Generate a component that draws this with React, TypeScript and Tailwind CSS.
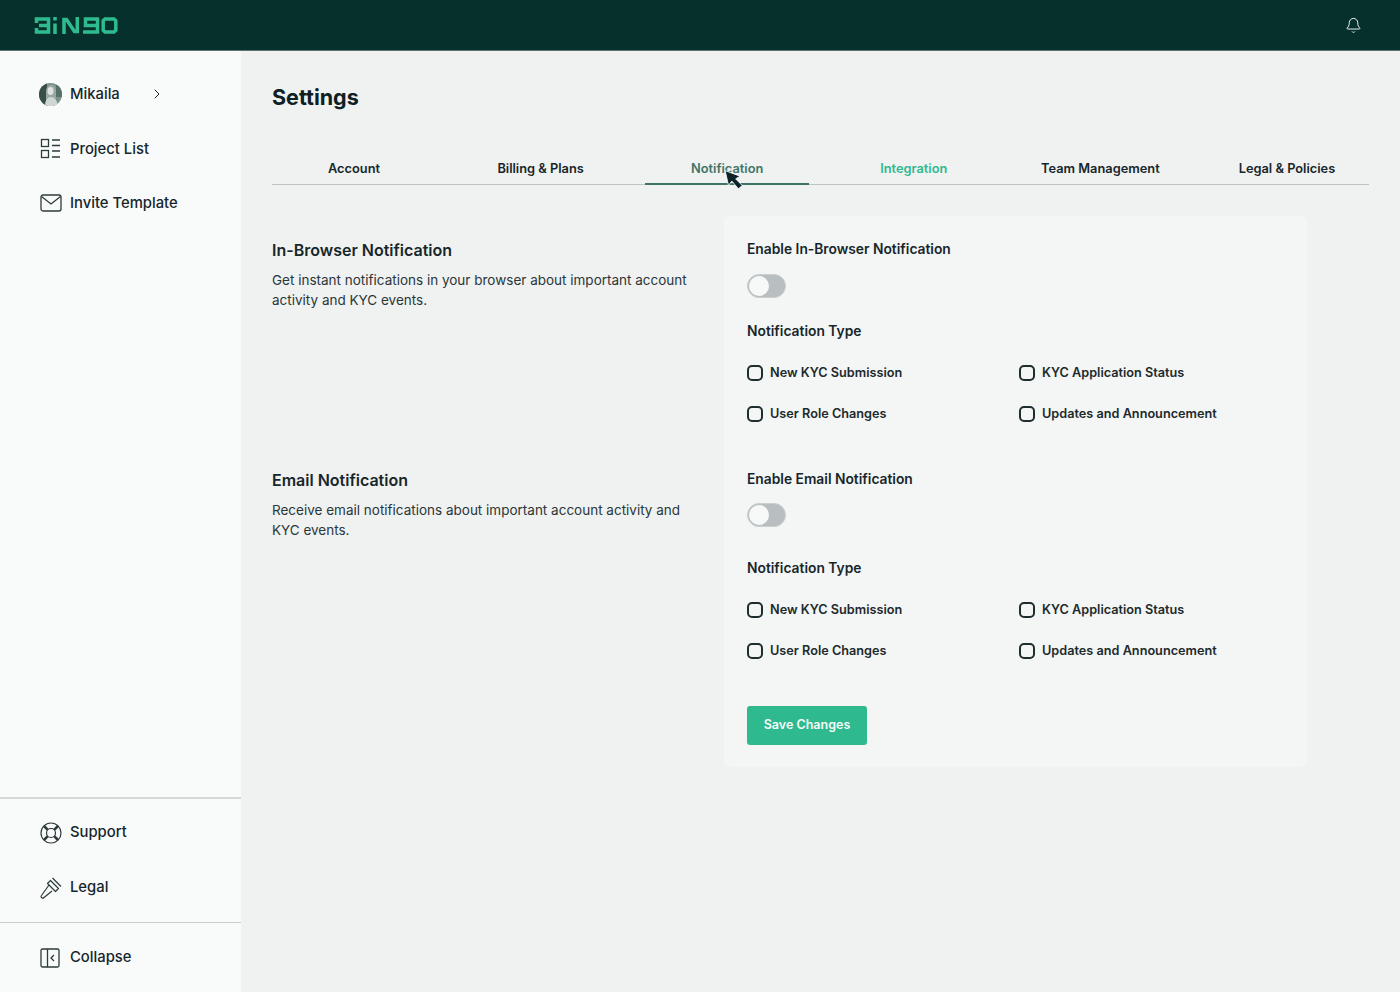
import { Bell, ChevronRight } from "lucide-react";

const tabs = ["Account", "Billing & Plans", "Notification", "Integration", "Team Management", "Legal & Policies"];

function Logo() {
  return (
    <svg width="84" height="17" viewBox="0 0 84 17" fill="none" stroke="#2fbb90" strokeWidth="3.500">
      <path d="M2.500 6V2h12v13h-12v-4M5 8.500h9.500" />
      <path d="M21 0v3.500M21 6.500V17" />
      <path d="M30 17V2.500h2.500l8 12h2.800V0" />
      <path d="M65 2H51.500v6.500H64M63.500 2v13H49" />
      <path d="M71 2h9l1.800 1.800v9.400L80 15h-9l-1.800-1.800V3.800z" />
    </svg>
  );
}

function Avatar() {
  return (
    <svg width="23" height="23" viewBox="0 0 23 23" className="shrink-0">
      <defs>
        <clipPath id="avatar-clip">
          <circle cx="11.500" cy="11.500" r="11.500" />
        </clipPath>
      </defs>
      <g clipPath="url(#avatar-clip)">
        <rect width="23" height="23" fill="#7d908b" />
        <rect width="8" height="23" fill="#3a4e49" />
        <rect x="17" width="6" height="14" fill="#56706a" />
        <path d="M7 23V9c0-5 2-7 5-7s5 2 5 7v14z" fill="#9aa8a4" />
        <ellipse cx="11.500" cy="8" rx="3" ry="4" fill="#dfe4e2" />
        <path d="M6 23c0-6 3-9 6-9s6 3 7 9z" fill="#cfd7d4" />
      </g>
    </svg>
  );
}

function ListIcon() {
  return (
    <svg width="22" height="22" viewBox="0 0 22 22" fill="none" stroke="#2d3b3a" strokeWidth="1.300">
      <rect x="1.500" y="1.500" width="7" height="7" />
      <rect x="1.500" y="12.500" width="7" height="7" />
      <path d="M12 2h8M12 7.500h8M12 13h8M12 19h8" />
    </svg>
  );
}

function MailIcon() {
  return (
    <svg width="22" height="18" viewBox="0 0 22 18" fill="none" stroke="#2d3b3a" strokeWidth="1.300">
      <rect x="1" y="1" width="20" height="16" rx="2" />
      <path d="M1.500 2.500 11 10l9.500-7.500" />
    </svg>
  );
}

function SupportIcon() {
  return (
    <svg width="22" height="22" viewBox="0 0 22 22" fill="none" stroke="#2d3b3a" strokeWidth="1.200">
      <circle cx="11" cy="11" r="10" />
      <circle cx="11" cy="11" r="4.500" />
      <path d="m4 4 3.800 3.800M18 4l-3.800 3.800M4 18l3.800-3.800M18 18l-3.800-3.800" strokeWidth="2.600" />
    </svg>
  );
}

function GavelIcon() {
  return (
    <svg width="22" height="22" viewBox="0 0 22 22" fill="none" stroke="#2d3b3a" strokeWidth="1.200" strokeLinejoin="round">
      <path d="m10.500 3.500 8 8-3 3-8-8z" />
      <path d="m12.500 1 8.500 8.500" />
      <path d="m9 8-7.500 10.500a1.500 1.500 0 0 0 2.500 2L12 14" />
    </svg>
  );
}

function CollapseIcon() {
  return (
    <svg width="20" height="20" viewBox="0 0 20 20" fill="none" stroke="#2d3b3a" strokeWidth="1.300">
      <rect x="1" y="1" width="18" height="18" rx="1.500" />
      <path d="M7.500 1v18" />
      <path d="m14 7-3 3 3 3" />
    </svg>
  );
}

function NavItem({ icon, label }: { icon: React.ReactNode; label: string }) {
  return (
    <div className="flex items-center h-6 pl-10 text-[14.800px] font-medium text-[#17262a]">
      <span className="w-[30px] flex items-center">{icon}</span>
      {label}
    </div>
  );
}

function Check({ label }: { label: string }) {
  return (
    <label className="flex items-center gap-[7px] text-[12.700px] font-semibold text-[#1d2a2c] h-5">
      <span className="w-4 h-4 rounded-[5px] border-2 border-[#1f2d2e]" />
      {label}
    </label>
  );
}

function Toggle() {
  return (
    <div className="w-[39px] h-[24px] rounded-full bg-[#b9bfc0] border border-[#c9cecf] flex items-center pl-px">
      <div className="w-5 h-5 rounded-full bg-[#f7f8f8]" />
    </div>
  );
}

function NotificationOptions({ title, second }: { title: string; second?: boolean }) {
  return (
    <div>
      <h4 className="text-[13.800px] font-semibold text-[#17262a] leading-5">{title}</h4>
      <div className={second ? "mt-[14px]" : "mt-[15px]"}>
        <Toggle />
      </div>
      <h4 className={second ? "mt-[31px] text-[13.800px] font-semibold text-[#17262a] leading-5" : "mt-[23px] text-[13.800px] font-semibold text-[#17262a] leading-5"}>
        Notification Type
      </h4>
      <div className="mt-[22px] grid grid-cols-[272px_1fr] gap-y-[21px]">
        <Check label="New KYC Submission" />
        <Check label="KYC Application Status" />
        <Check label="User Role Changes" />
        <Check label="Updates and Announcement" />
      </div>
    </div>
  );
}

function SectionText({ title, text }: { title: string; text: string }) {
  return (
    <div className="w-[425px]">
      <h3 className="text-base font-semibold text-[#17262a] leading-6">{title}</h3>
      <p className="mt-[9px] text-[13.500px] leading-[19.500px] text-[#2a3739]">{text}</p>
    </div>
  );
}

export default function App() {
  return (
    <div className="h-[992px] w-[1400px] flex flex-col overflow-hidden bg-[#f0f1f1] font-['Inter',sans-serif]">
      <header className="h-[51px] shrink-0 bg-[#06302c] border-b border-[#5c7370] flex items-center justify-between pl-[34px] pr-[38px]">
        <Logo />
        <Bell size={17} strokeWidth={1.400} className="text-[#eef4f2]" />
      </header>

      <div className="flex flex-1 min-h-0">
        <aside className="w-[241px] shrink-0 bg-[#f9fbfb] flex flex-col">
          <div className="pt-[31px] flex flex-col">
            <div className="flex items-center h-6 pl-[39px] text-[14.800px] font-medium text-[#17262a]">
              <Avatar />
              <span className="ml-2">Mikaila</span>
              <ChevronRight size={16} strokeWidth={1.500} className="ml-[29px] text-[#17262a]" />
            </div>
            <div className="mt-[31px]">
              <NavItem icon={<ListIcon />} label="Project List" />
            </div>
            <div className="mt-[30px]">
              <NavItem icon={<MailIcon />} label="Invite Template" />
            </div>
          </div>

          <div className="mt-auto border-t-2 border-[#d6d8d8] pt-[21.500px] pb-[22.500px] flex flex-col gap-[31px]">
            <NavItem icon={<SupportIcon />} label="Support" />
            <NavItem icon={<GavelIcon />} label="Legal" />
          </div>
          <div className="border-t border-[#c9cccc] h-[70px] flex items-center">
            <NavItem icon={<CollapseIcon />} label="Collapse" />
          </div>
        </aside>

        <main className="flex-1 pl-[31px] pr-[31px]">
          <h1 className="mt-[31px] text-[21.500px] leading-[30px] font-bold text-[#0d2024]">Settings</h1>

          <div className="relative mt-[39px] flex justify-between border-b border-[#bfc3c3] h-[34px]">
            {tabs.map((tab) => (
              <div
                key={tab}
                className={
                  tab === "Notification"
                    ? "w-[164px] h-[34px] text-center text-[12.800px] font-semibold leading-[36px] text-[#3f7568] border-b-2 border-[#3f7568]"
                    : tab === "Integration"
                      ? "w-[164px] text-center text-[12.800px] font-semibold leading-[36px] text-[#2fb98f]"
                      : "w-[164px] text-center text-[12.800px] font-semibold leading-[36px] text-[#17262a]"
                }
              >
                {tab}
              </div>
            ))}
            <svg width="20" height="22" viewBox="0 0 18 20" className="absolute left-[452px] top-[18px]">
              <path d="M1 1.500 4 15l3-4 6 7 3.500-3-6-6 4-2.500z" fill="#0b2226" stroke="#f4f6f6" strokeWidth="0.800" />
            </svg>
          </div>

          <div className="mt-[31px] flex">
            <div className="w-[452px] shrink-0 pt-[22px]">
              <div className="h-[230px]">
                <SectionText
                  title="In-Browser Notification"
                  text="Get instant notifications in your browser about important account activity and KYC events."
                />
              </div>
              <SectionText
                title="Email Notification"
                text="Receive email notifications about important account activity and KYC events."
              />
            </div>

            <div className="w-[583px] h-[551px] bg-[#f4f6f6] rounded-md pl-[23px] pt-[23px]">
              <NotificationOptions title="Enable In-Browser Notification" />
              <div className="mt-[45px]">
                <NotificationOptions title="Enable Email Notification" second />
              </div>
              <button className="mt-[45px] w-[120px] h-[39px] rounded-[3px] bg-[#2fb98f] text-[12.500px] font-semibold text-[#f4fbf8]">
                Save Changes
              </button>
            </div>
          </div>
        </main>
      </div>
    </div>
  );
}
